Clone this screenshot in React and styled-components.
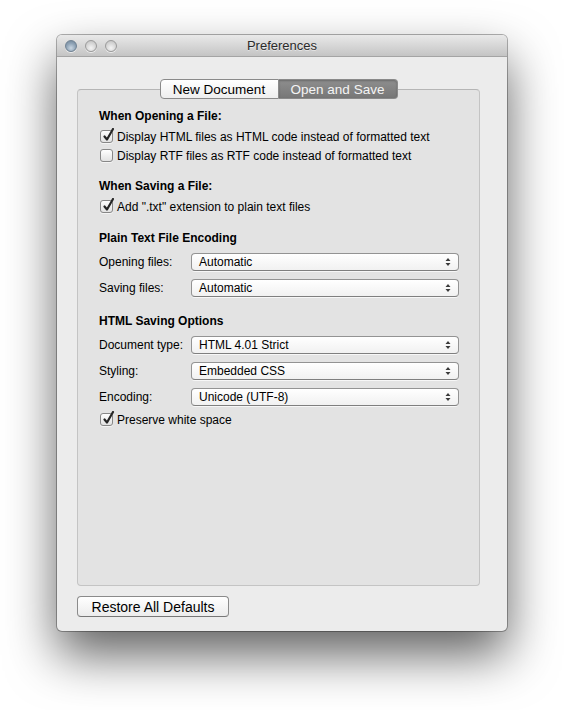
import React from "react";
import styled, { createGlobalStyle } from "styled-components";

const GlobalStyle = createGlobalStyle`
	body {
		margin: 0;
		background: #ffffff;
		font-family: "Liberation Sans", Arial, sans-serif;
		color: #000;
	}
`;

const Page = styled.div`
	padding: 35px 0 0 57px;
	height: 675px;
`;

const Window = styled.div`
	width: 450px;
	height: 596px;
	display: flex;
	flex-direction: column;
	background: #ececec;
	border-radius: 5px;
	overflow: hidden;
	box-shadow: 0 0 0 1px rgba(0, 0, 0, 0.3), 0 24px 50px rgba(0, 0, 0, 0.62);
`;

const TitleBar = styled.div`
	height: 22px;
	flex: none;
	display: grid;
	grid-template-columns: 1fr auto 1fr;
	align-items: center;
	background: linear-gradient(#e9e9e9, #d3d3d3 60%, #c4c4c4);
	border-bottom: 1px solid #a4a4a4;
	box-sizing: border-box;
`;

const Lights = styled.div`
	display: flex;
	gap: 8px;
	padding-left: 8px;
`;

const Light = styled.span`
	width: 12px;
	height: 12px;
	border-radius: 50%;
	box-sizing: border-box;
	border: 1px solid ${(p) => (p.$active ? "#6f8192" : "#9a9a9a")};
	background: ${(p) =>
		p.$active
			? "radial-gradient(circle at 50% 70%, #c9d6e2, #8ea2b5 55%, #6e8396)"
			: "radial-gradient(circle at 50% 70%, #f4f4f4, #d6d6d6 55%, #bdbdbd)"};
	box-shadow: 0 1px 0 rgba(255, 255, 255, 0.6);
`;

const Title = styled.div`
	font-size: 13px;
	color: #2b2b2b;
	text-shadow: 0 1px 0 rgba(255, 255, 255, 0.5);
`;

const Body = styled.div`
	flex: 1;
	display: flex;
	flex-direction: column;
	padding: 22px 27px 14px 20px;
`;

const TabsRow = styled.div`
	display: flex;
	justify-content: center;
	position: relative;
	z-index: 1;
`;

const Tab = styled.div`
	width: 119px;
	height: 20px;
	box-sizing: border-box;
	display: flex;
	align-items: center;
	justify-content: center;
	font-size: 13.5px;
	border: 1px solid #8a8a8a;
	color: ${(p) => (p.$selected ? "#f4f4f4" : "#000")};
	background: ${(p) =>
		p.$selected ? "linear-gradient(#8e8e8e, #777777)" : "linear-gradient(#ffffff, #eeeeee)"};
	box-shadow: ${(p) => (p.$selected ? "inset 0 1px 2px rgba(0,0,0,0.25)" : "none")};
	border-radius: ${(p) => (p.$first ? "4px 0 0 4px" : "0 4px 4px 0")};
	border-left-width: ${(p) => (p.$first ? "1px" : "0")};
`;

const Box = styled.div`
	flex: 1;
	margin-top: -10px;
	padding: 18px 20px 0 21px;
	background: #e3e3e3;
	border: 1px solid #c4c4c4;
	border-top-color: #b5b5b5;
	border-radius: 4px;
`;

const Section = styled.div`
	margin-top: ${(p) => p.$gap || 0}px;
`;

const Heading = styled.div`
	height: 16px;
	line-height: 16px;
	font-size: 12px;
	font-weight: bold;
	margin-bottom: 3px;
`;

const CheckRow = styled.label`
	height: 19px;
	display: flex;
	align-items: center;
	gap: 4px;
	padding-left: 1px;
	font-size: 12px;
`;

const CheckBox = styled.span`
	position: relative;
	width: 13px;
	height: 13px;
	flex: none;
	box-sizing: border-box;
	border: 1px solid #878787;
	border-radius: 3px;
	background: linear-gradient(#ffffff, #e2e2e2);
	box-shadow: 0 1px 0 rgba(255, 255, 255, 0.6);

	svg {
		position: absolute;
		left: 1px;
		top: -3px;
	}
`;

const FieldRow = styled.div`
	height: 26px;
	display: grid;
	grid-template-columns: 92px 1fr;
	align-items: center;
	font-size: 12px;
`;

const Popup = styled.div`
	height: 18px;
	box-sizing: border-box;
	display: flex;
	align-items: center;
	justify-content: space-between;
	padding: 0 7px 0 7px;
	border: 1px solid #939393;
	border-bottom-color: #7f7f7f;
	border-radius: 4px;
	background: linear-gradient(#ffffff, #f1f1f1);
	box-shadow: 0 1px 0 rgba(255, 255, 255, 0.7);
	font-size: 12px;
`;

const Footer = styled.div`
	margin-top: 10px;
	display: flex;
`;

const Button = styled.button`
	width: 152px;
	height: 21px;
	padding: 0;
	box-sizing: border-box;
	border: 1px solid #8b8b8b;
	border-bottom-color: #777;
	border-radius: 4px;
	background: linear-gradient(#ffffff, #ececec);
	font-family: "Liberation Sans", Arial, sans-serif;
	font-size: 14px;
	color: #000;
`;

function Check({ checked, children }) {
	return (
		<CheckRow>
			<CheckBox>
				{checked && (
					<svg width="13" height="14" viewBox="0 0 13 14">
						<path d="M2.5 8.5 L5 11.5 L11 1" fill="none" stroke="#262626" strokeWidth="2.2" strokeLinecap="round" strokeLinejoin="round" />
					</svg>
				)}
			</CheckBox>
			{children}
		</CheckRow>
	);
}

function Select({ label, value }) {
	return (
		<FieldRow>
			<span>{label}</span>
			<Popup>
				<span>{value}</span>
				<svg width="6" height="10" viewBox="0 0 6 10">
					<path d="M0.5 4 L3 1 L5.5 4 Z M0.5 6 L3 9 L5.5 6 Z" fill="#3a3a3a" />
				</svg>
			</Popup>
		</FieldRow>
	);
}

export default function App() {
	return (
		<Page>
			<GlobalStyle />
			<Window>
				<TitleBar>
					<Lights>
						<Light $active />
						<Light />
						<Light />
					</Lights>
					<Title>Preferences</Title>
					<span />
				</TitleBar>
				<Body>
					<TabsRow>
						<Tab $first>New Document</Tab>
						<Tab $selected>Open and Save</Tab>
					</TabsRow>
					<Box>
						<Section>
							<Heading>When Opening a File:</Heading>
							<Check checked>Display HTML files as HTML code instead of formatted text</Check>
							<Check>Display RTF files as RTF code instead of formatted text</Check>
						</Section>
						<Section $gap={13}>
							<Heading>When Saving a File:</Heading>
							<Check checked>Add ".txt" extension to plain text files</Check>
						</Section>
						<Section $gap={14}>
							<Heading>Plain Text File Encoding</Heading>
							<Select label="Opening files:" value="Automatic" />
							<Select label="Saving files:" value="Automatic" />
						</Section>
						<Section $gap={12}>
							<Heading>HTML Saving Options</Heading>
							<Select label="Document type:" value="HTML 4.01 Strict" />
							<Select label="Styling:" value="Embedded CSS" />
							<Select label="Encoding:" value="Unicode (UTF-8)" />
							<Check checked>Preserve white space</Check>
						</Section>
					</Box>
					<Footer>
						<Button>Restore All Defaults</Button>
					</Footer>
				</Body>
			</Window>
		</Page>
	);
}
